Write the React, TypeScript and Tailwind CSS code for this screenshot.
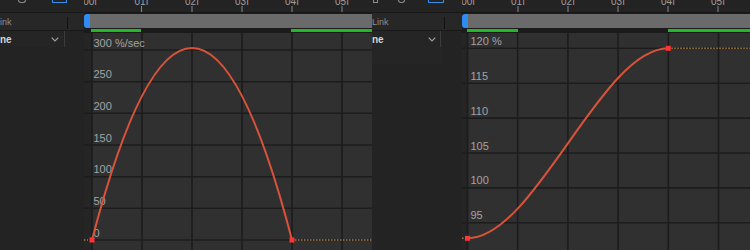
import React from "react";

const GRID = "#1c1c1c";
const CURVE = "#d9533b";
const KEY = "#ff3434";
const DOT = "#a37a45";

type GraphSpec = {
  vx: number[];
  hy: number[];
  labels: string[];
  labelX: number;
  curve: string;
  start: [number, number];
  end: [number, number];
};

function Graph({ vx, hy, labels, labelX, curve, start, end }: GraphSpec) {
  return (
    <svg width={288} height={217} className="block">
      <rect x={0} y={0} width={288} height={217} fill="#303030" />
      <rect x={0} y={0} width={vx[0]} height={217} fill="#252525" />
      {vx.map((x) => (
        <line key={"v" + x} x1={x} x2={x} y1={0} y2={217} stroke={GRID} strokeWidth={1.6} />
      ))}
      {hy.map((y) => (
        <line key={"h" + y} x1={0} x2={288} y1={y} y2={y} stroke={GRID} strokeWidth={1.6} />
      ))}
      {labels.map((t, i) => (
        <text key={t} x={labelX} y={hy[i] - 3.5} fontSize={11} fill="#a3a3a3">
          {t}
        </text>
      ))}
      <line x1={0} x2={4} y1={start[1]} y2={start[1]} stroke={DOT} strokeWidth={1.5} strokeDasharray="1.5 1.5" />
      <line x1={end[0] + 3} x2={288} y1={end[1]} y2={end[1]} stroke={DOT} strokeWidth={1.5} strokeDasharray="1.5 1.5" />
      <path d={curve} fill="none" stroke={CURVE} strokeWidth={2} />
      <rect x={start[0] - 2.5} y={start[1] - 2.5} width={5} height={5} fill={KEY} />
      <rect x={end[0] - 2.5} y={end[1] - 2.5} width={5} height={5} fill={KEY} />
    </svg>
  );
}

function Ruler({ ticks, zeroX }: { ticks: number[]; zeroX: number }) {
  const names = ["01f", "02f", "03f", "04f", "05f"];
  return (
    <svg width={288} height={13} className="block">
      <rect width={288} height={13} fill="#232323" />
      <line x1={0} x2={288} y1={12.5} y2={12.5} stroke="#171717" />
      <text x={zeroX} y={4.5} fontSize={10} fill="#a0a0a0" textAnchor="middle">
        0:00f
      </text>
      {ticks.map((x, i) => (
        <g key={x}>
          <text x={x} y={4.5} fontSize={10} fill="#a0a0a0" textAnchor="middle">
            {names[i]}
          </text>
          <line x1={x} x2={x} y1={6} y2={12} stroke="#8a8a8a" strokeWidth={1} />
        </g>
      ))}
    </svg>
  );
}

function Chevron() {
  return (
    <svg width={8} height={5} viewBox="0 0 8 5" className="block">
      <polyline points="0.7,0.7 4,4 7.3,0.7" fill="none" stroke="#a0a0a0" strokeWidth={1.2} />
    </svg>
  );
}

function WorkArea({ g1, g1w, g2 }: { g1: number; g1w: number; g2: number }) {
  return (
    <div className="flex h-[20px] flex-col bg-[#1b1b1b] pt-px">
      <div className="flex h-[14px]">
        <div className="h-[14px] w-[6px] rounded-l-[3px] bg-[#2f8cf0]" />
        <div className="h-[14px] flex-1 bg-[#6a6a6a]" />
      </div>
      <div className="mt-px flex h-[3px]">
        <div className="h-[3px] bg-[#22b82a]" style={{ marginLeft: g1, width: g1w }} />
        <div className="h-[3px] flex-1 bg-[#22b82a]" style={{ marginLeft: g2 }} />
      </div>
    </div>
  );
}

export default function App() {
  return (
    <div className="flex h-[250px] w-[750px] overflow-hidden bg-[#232323] font-['Liberation_Sans',Arial,sans-serif]">
      {/* LEFT PANEL */}
      <div className="flex h-[250px] w-[372px] shrink-0 overflow-hidden">
        <div className="flex w-[84px] shrink-0 flex-col bg-[#232323]">
          <div className="flex h-[13px] items-start border-b border-[#181818]">
            <div className="ml-[18px] h-[3px] w-[8px] rounded-b-full border-[1.5px] border-t-0 border-[#8c8c8c]" />
            <div className="ml-[26px] h-[3px] w-[15px] border-[1.5px] border-t-0 border-[#3b8ee8]" />
          </div>
          <div className="flex h-[18px] items-center overflow-hidden border-b border-[#181818] bg-[#272727] pt-[2px]">
            <span className="-ml-[5px] text-[9px] leading-none text-[#8e8e8e]">Link</span>
            <div className="ml-auto mr-[16px] h-[12px] w-px bg-[#111111]" />
          </div>
          <div className="flex h-[16px] items-center">
            <div className="flex h-[16px] w-[63px] items-center bg-[#252525] pt-px">
              <span className="text-[10px] font-bold leading-none text-[#d4d4d4]">ne</span>
              <div className="ml-[39px]">
                <Chevron />
              </div>
            </div>
            <div className="ml-px h-[16px] w-px bg-[#3c3c3c]" />
          </div>
          <div className="flex-1" />
        </div>
        <div className="flex w-[288px] shrink-0 flex-col">
          <Ruler ticks={[57.5, 108, 158, 208, 258]} zeroX={2} />
          <WorkArea g1={7} g1w={50} g2={150} />
          <Graph
            vx={[8, 58, 108, 158, 208, 258]}
            hy={[17, 48.7, 80.3, 112, 143.7, 175.3, 207]}
            labels={["300 %/sec", "250", "200", "150", "100", "50", "0"]}
            labelX={9.5}
            curve="M8 207 Q108 -177 208 207"
            start={[8, 207]}
            end={[208, 207]}
          />
        </div>
      </div>

      {/* RIGHT PANEL */}
      <div className="flex h-[250px] w-[378px] shrink-0 overflow-hidden">
        <div className="flex w-[90px] shrink-0 flex-col bg-[#232323]">
          <div className="flex h-[13px] items-start border-b border-[#181818]">
            <div className="ml-px h-[3px] w-[5px] border-[1.5px] border-t-0 border-[#8c8c8c]" />
            <div className="ml-[20px] h-[3px] w-[7px] rounded-b-full border-[1.5px] border-t-0 border-[#8c8c8c]" />
            <div className="ml-[23px] h-[3px] w-[16px] border-[1.5px] border-t-0 border-[#3b8ee8]" />
          </div>
          <div className="flex h-[18px] items-center overflow-hidden border-b border-[#181818] bg-[#272727] pt-[2px]">
            <span className="text-[9px] leading-none text-[#8e8e8e]">Link</span>
            <div className="ml-auto mr-[17px] h-[12px] w-px bg-[#111111]" />
          </div>
          <div className="flex h-[16px] items-center">
            <div className="flex h-[16px] w-[67px] items-center bg-[#252525] pt-px">
              <span className="text-[10px] font-bold leading-none text-[#d4d4d4]">ne</span>
              <div className="ml-[44px]">
                <Chevron />
              </div>
            </div>
            <div className="ml-px h-[16px] w-px bg-[#3c3c3c]" />
          </div>
          <div className="h-[17px] w-[70px] bg-[#252525]" />
          <div className="flex-1" />
        </div>
        <div className="flex w-[288px] shrink-0 flex-col">
          <Ruler ticks={[56, 106, 156, 206, 256]} zeroX={2} />
          <WorkArea g1={5} g1w={51} g2={150} />
          <Graph
            vx={[5.5, 55.7, 105.9, 156.1, 206.3, 256.5]}
            hy={[15.3, 50.2, 85.1, 120, 154.9, 189.8]}
            labels={["120 %", "115", "110", "105", "100", "95"]}
            labelX={8.5}
            curve="M5.5 205.3 C72.5 205.3 139.3 15.3 206.3 15.3"
            start={[5.5, 205.3]}
            end={[206.3, 15.3]}
          />
        </div>
      </div>
    </div>
  );
}
